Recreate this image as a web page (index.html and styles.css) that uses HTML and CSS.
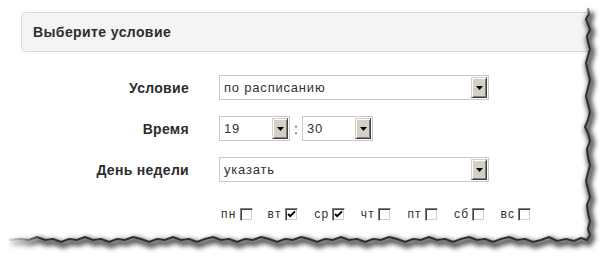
FILE: index.html
```html
<!DOCTYPE html>
<html lang="ru">
<head>
    <meta charset="UTF-8">
    <title>Выберите условие</title>
    <link rel="stylesheet" href="styles.css">
</head>
<body>
    <div class="paper">
        <div class="panel-title">Выберите условие</div>

        <div class="form">
            <div class="label">Условие</div>
            <div class="field">
                <div class="select wide">
                    <span class="value">по расписанию</span>
                    <span class="arrow"><svg width="7" height="4" viewBox="0 0 7 4"><polygon points="0,0 7,0 3.5,4" fill="#000"/></svg></span>
                </div>
            </div>

            <div class="label">Время</div>
            <div class="field">
                <div class="select short">
                    <span class="value">19</span>
                    <span class="arrow"><svg width="7" height="4" viewBox="0 0 7 4"><polygon points="0,0 7,0 3.5,4" fill="#000"/></svg></span>
                </div>
                <span class="colon">:</span>
                <div class="select short">
                    <span class="value">30</span>
                    <span class="arrow"><svg width="7" height="4" viewBox="0 0 7 4"><polygon points="0,0 7,0 3.5,4" fill="#000"/></svg></span>
                </div>
            </div>

            <div class="label">День недели</div>
            <div class="field">
                <div class="select wide">
                    <span class="value">указать</span>
                    <span class="arrow"><svg width="7" height="4" viewBox="0 0 7 4"><polygon points="0,0 7,0 3.5,4" fill="#000"/></svg></span>
                </div>
            </div>

            <div></div>
            <div class="days">
                <label class="day">пн <span class="box"></span></label>
                <label class="day">вт <span class="box"><svg width="9" height="9" viewBox="0 0 9 9"><path d="M1 4 L3.2 6.2 L8 1.4" fill="none" stroke="#000" stroke-width="2"/></svg></span></label>
                <label class="day">ср <span class="box"><svg width="9" height="9" viewBox="0 0 9 9"><path d="M1 4 L3.2 6.2 L8 1.4" fill="none" stroke="#000" stroke-width="2"/></svg></span></label>
                <label class="day">чт <span class="box"></span></label>
                <label class="day">пт <span class="box"></span></label>
                <label class="day">сб <span class="box"></span></label>
                <label class="day">вс <span class="box"></span></label>
            </div>
        </div>
    </div>

    <!-- torn paper edge -->
    <svg class="torn" width="609" height="262" viewBox="0 0 609 262">
        <defs>
            <filter id="blur" x="-10%" y="-10%" width="120%" height="120%">
                <feGaussianBlur stdDeviation="2.4"/>
            </filter>
            <linearGradient id="gl" x1="0" y1="0" x2="1" y2="0">
                <stop offset="0" stop-color="#000"/>
                <stop offset="0.07" stop-color="#fff"/>
                <stop offset="1" stop-color="#fff"/>
            </linearGradient>
            <linearGradient id="gt" x1="0" y1="0" x2="0" y2="1">
                <stop offset="0" stop-color="#000"/>
                <stop offset="0.06" stop-color="#fff"/>
                <stop offset="1" stop-color="#fff"/>
            </linearGradient>
            <mask id="fadeLeft"><rect width="609" height="262" fill="url(#gl)"/></mask>
            <mask id="fadeTop"><rect width="609" height="262" fill="url(#gt)"/></mask>
            <polyline id="edge" fill="none" points="588,8 589,14 586,19 588,24 590,30 587,36 588,42 590,49 588,56 586,63 588,72 590,80 588,88 586,96 588,104 590,112 588,120 585,127 588,133 590,141 587,149 588,157 590,165 588,173 586,181 588,189 590,197 587,205 588,213 590,221 588,229 590,235 587,240 581,238 574,241 566,239 557,241 549,237 541,240 533,242 525,239 517,240 509,237 501,239 493,242 485,239 477,240 469,237 461,239 453,242 445,239 437,240 429,237 421,240 413,239 405,242 397,239 389,237 381,240 373,239 365,242 357,239 349,240 341,237 333,240 325,239 317,242 309,239 301,237 293,240 285,239 277,242 269,239 261,237 253,240 245,239 237,242 229,239 221,240 213,237 205,239 197,242 189,239 181,240 173,237 165,240 157,239 149,242 141,239 133,237 125,240 117,239 109,242 101,239 93,240 85,237 77,240 69,239 61,242 53,239 45,240 37,237 29,240 19,239 9,240"/>
        </defs>
        <g mask="url(#fadeTop)">
            <g mask="url(#fadeLeft)">
                <use href="#edge" stroke="#000" stroke-opacity="0.7" stroke-width="6" filter="url(#blur)" transform="translate(2,3)"/>
                <use href="#edge" stroke="#2e2e2e" stroke-width="2"/>
            </g>
        </g>
    </svg>
</body>
</html>
```

FILE: styles.css
```css
body {
    margin: 0;
    padding: 0;
    background: #fff;
    font-family: 'Liberation Sans', Arial, sans-serif;
    color: #333;
}
.paper {
    position: relative;
    width: 588px;
    height: 240px;
    overflow: hidden;
    background: #fff;
    padding: 12px 0 0 21px;
    box-sizing: border-box;
}
.panel-title {
    width: 600px;
    height: 40px;
    box-sizing: border-box;
    padding-left: 11px;
    display: flex;
    align-items: center;
    background: #f4f4f4;
    border: 1px solid #dcdcdc;
    border-radius: 4px;
    font-size: 14px;
    font-weight: bold;
    letter-spacing: 0.4px;
    color: #2d2d2d;
}
.form {
    display: grid;
    grid-template-columns: 168px auto;
    column-gap: 30px;
    row-gap: 16px;
    align-items: center;
    margin-top: 23px;
}
.label {
    text-align: right;
    font-size: 14px;
    font-weight: bold;
    letter-spacing: 0.3px;
    color: #2d2d2d;
}
.field {
    display: flex;
    align-items: center;
}
.select {
    display: flex;
    align-items: center;
    height: 25px;
    box-sizing: border-box;
    border: 1px solid #c9c9c9;
    padding: 1px 1px 1px 4px;
    background: #fff;
}
.select.wide {
    width: 270px;
}
.select.short {
    width: 71px;
}
.select .value {
    flex: 1;
    font-size: 13px;
    letter-spacing: 0.8px;
    color: #333;
}
.arrow {
    width: 16px;
    height: 21px;
    box-sizing: border-box;
    display: flex;
    align-items: center;
    justify-content: center;
    background: #d4d0c8;
    border: 1px solid;
    border-color: #d4d0c8 #404040 #404040 #d4d0c8;
    box-shadow: inset 1px 1px #fff, inset -1px -1px #808080;
}
.colon {
    width: 12px;
    text-align: center;
    font-size: 14px;
    color: #333;
}
.days {
    display: flex;
    margin-top: 9px;
    padding-left: 2px;
}
.day {
    width: 46.6px;
    display: flex;
    align-items: center;
    gap: 3px;
    font-size: 12px;
    letter-spacing: 1.2px;
    color: #333;
}
.box {
    width: 13px;
    height: 13px;
    box-sizing: border-box;
    display: flex;
    align-items: center;
    justify-content: center;
    background: #fff;
    border: 1px solid;
    border-color: #808080 #fff #fff #808080;
    box-shadow: inset 1px 1px #404040, inset -1px -1px #d4d0c8;
}
.torn {
    position: absolute;
    top: 0;
    left: 0;
    pointer-events: none;
}
```
